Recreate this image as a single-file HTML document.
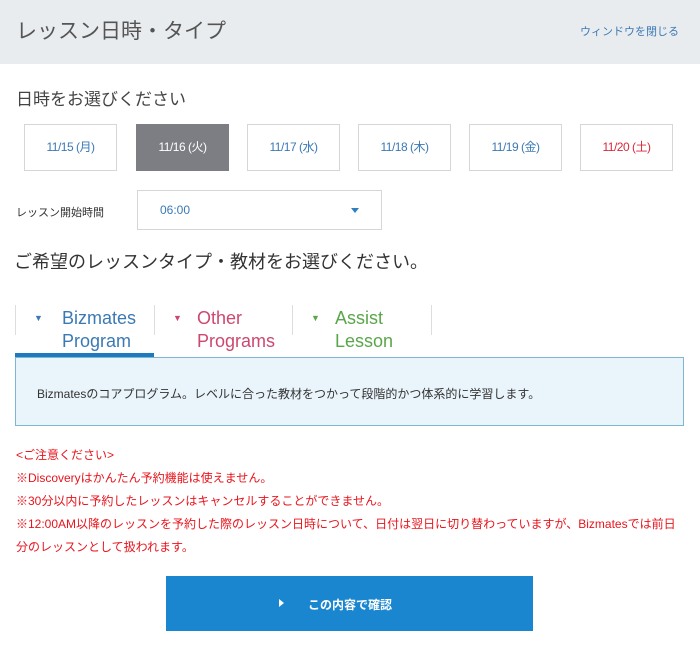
<!DOCTYPE html>
<html><head><meta charset="utf-8"><style>
*{margin:0;padding:0;box-sizing:border-box}
body{width:700px;height:647px;background:#fff;font-family:"Liberation Sans","Noto Sans CJK JP",sans-serif;position:relative;overflow:hidden;color:#333}
.a{position:absolute}
.hdr{left:0;top:0;width:700px;height:64px;background:#e9ecef}
.d{top:124px;width:93px;height:47px;border:1px solid #d6d6d6;text-align:center;line-height:45px;font-size:12px;color:#3b79b5;letter-spacing:-0.5px}
.tab{top:307px;font-size:18px;line-height:23px}
.tri{top:313px;font-size:9px}
.sep{top:305px;width:1px;height:30px;background:#ddd}
.n{left:16px;font-size:12px;color:#e8141c}
</style></head><body>
<div class="a hdr"></div>
<div class="a" style="left:16px;top:15px;font-size:21px;color:#555">レッスン日時・タイプ</div>
<div class="a" style="left:580px;top:23px;font-size:11px;color:#3b79b5">ウィンドウを閉じる</div>
<div class="a" style="left:16px;top:85px;font-size:17px;color:#444">日時をお選びください</div>
<div class="a d" style="left:24px">11/15 (月)</div>
<div class="a d" style="left:136px;background:#7d7e83;color:#fff;border-color:#7d7e83">11/16 (火)</div>
<div class="a d" style="left:247px">11/17 (水)</div>
<div class="a d" style="left:358px">11/18 (木)</div>
<div class="a d" style="left:469px">11/19 (金)</div>
<div class="a d" style="left:580px;color:#d8293a">11/20 (土)</div>
<div class="a" style="left:16px;top:204px;font-size:11px;color:#333">レッスン開始時間</div>
<div class="a" style="left:137px;top:190px;width:245px;height:40px;border:1px solid #d6d6d6"></div>
<div class="a" style="left:160px;top:203px;font-size:12px;color:#3b79b5">06:00</div>
<div class="a" style="left:351px;top:208px;width:0;height:0;border-left:4px solid transparent;border-right:4px solid transparent;border-top:5px solid #2f7fbf"></div>
<div class="a" style="left:14px;top:248px;font-size:18px;color:#333">ご希望のレッスンタイプ・教材をお選びください。</div>
<div class="a sep" style="left:15px"></div>
<div class="a sep" style="left:154px"></div>
<div class="a sep" style="left:292px"></div>
<div class="a sep" style="left:431px"></div>
<div class="a tri" style="left:34px;color:#3b79b5">▼</div>
<div class="a tab" style="left:62px;color:#3b79b5">Bizmates<br>Program</div>
<div class="a tri" style="left:173px;color:#cc4870">▼</div>
<div class="a tab" style="left:197px;color:#cc4870">Other<br>Programs</div>
<div class="a tri" style="left:311px;color:#5aa64a">▼</div>
<div class="a tab" style="left:335px;color:#5aa64a">Assist<br>Lesson</div>
<div class="a" style="left:15px;top:353px;width:139px;height:4px;background:#1d7ac0"></div>
<div class="a" style="left:15px;top:357px;width:669px;height:69px;background:#eaf4fb;border:1px solid #7fb7d2"></div>
<div class="a" style="left:37px;top:385px;font-size:12px;color:#333">Bizmatesのコアプログラム。レベルに合った教材をつかって段階的かつ体系的に学習します。</div>
<div class="a n" style="top:446px">&lt;ご注意ください&gt;</div>
<div class="a n" style="top:469px">※Discoveryはかんたん予約機能は使えません。</div>
<div class="a n" style="top:492px">※30分以内に予約したレッスンはキャンセルすることができません。</div>
<div class="a n" style="top:515px;white-space:nowrap">※12:00AM以降のレッスンを予約した際のレッスン日時について、日付は翌日に切り替わっていますが、Bizmatesでは前日</div>
<div class="a n" style="top:538px">分のレッスンとして扱われます。</div>
<div class="a" style="left:166px;top:576px;width:367px;height:55px;background:#1a86d0"></div>
<div class="a" style="left:279px;top:599px;width:0;height:0;border-top:4px solid transparent;border-bottom:4px solid transparent;border-left:5px solid #fff"></div>
<div class="a" style="left:308px;top:596px;font-size:12px;font-weight:bold;color:#fff">この内容で確認</div>
</body></html>
